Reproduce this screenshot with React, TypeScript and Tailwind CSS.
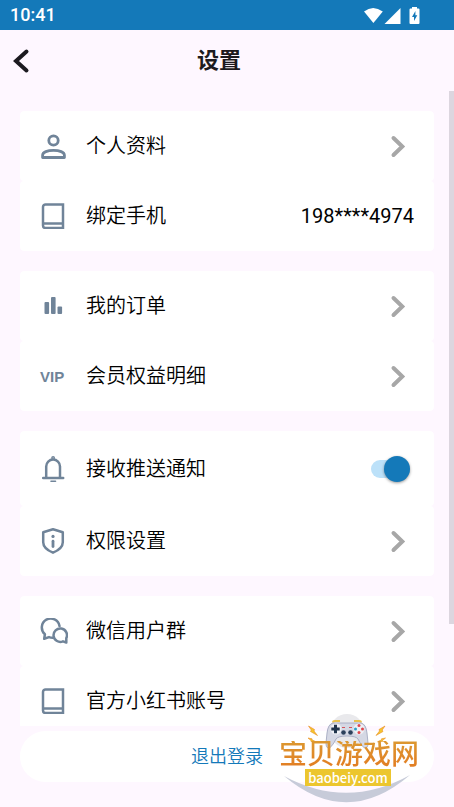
import { useState, type ReactNode } from "react";

const iconProps = {
  viewBox: "0 0 26 26",
  fill: "none",
  stroke: "currentColor",
  strokeWidth: 2.8,
  strokeLinecap: "round" as const,
  strokeLinejoin: "round" as const,
  className: "size-[26px]",
  "aria-hidden": true,
};

const UserIcon = () => (
  <svg {...iconProps}>
    <circle cx="13.5" cy="7.5" r="4.7" />
    <path d="M2.6 24.500v-2.200c0-3.200 5-5 10.900-5s10.900 1.800 10.900 5v2.200z" />
  </svg>
);

const BookIcon = () => (
  <svg {...iconProps} strokeWidth={2.5} strokeLinecap="butt" strokeLinejoin="miter">
    <path d="M23 1.500v23.500H5.500A2.500 2.500 0 0 1 3 22.500V4A2.500 2.500 0 0 1 5.500 1.500z" />
    <path d="M3 20.500h20" />
  </svg>
);

const ChartIcon = () => (
  <svg {...iconProps} stroke="none" fill="currentColor">
    <rect x="4.5" y="9" width="4.600" height="12" rx="1" />
    <rect x="11" y="4" width="4.600" height="17" rx="1" />
    <rect x="17.500" y="13.500" width="4.600" height="7.500" rx="1" />
  </svg>
);

const BellIcon = () => (
  <svg {...iconProps} strokeWidth={2.500}>
    <path d="M3.200 22h20M6.200 22V10.500a6.900 6.900 0 0 1 13.800 0V22" />
    <path d="M11 25.200h4.500" strokeWidth="1.600" />
    <circle cx="13.100" cy="2" r="0.700" />
  </svg>
);

const ShieldIcon = () => (
  <svg {...iconProps} strokeWidth={2.500}>
    <path d="M13 1.300 22.800 4.300v9.900c0 5-4.700 8.300-9.800 10.500C7.900 22.500 3.200 19.200 3.200 14.200V4.300z" />
    <path d="M13 13.200v5.300" strokeWidth="2.800" />
    <circle cx="13" cy="8.400" r="1.600" fill="currentColor" stroke="none" />
  </svg>
);

const ChatIcon = () => (
  <svg {...iconProps} viewBox="0 0 28 26" strokeWidth={2.500} className="h-[26px] w-7">
    <path d="M13 19.800a9 9 0 0 1-4-.7L4.200 20.800l.7-4.600A8.900 8.900 0 1 1 19.500 8" />
    <path d="M26.300 24.500v-4.400A6.700 6.700 0 1 0 23 23.300z" />
  </svg>
);

const Chevron = () => (
  <svg viewBox="0 0 26 26" className="mr-[3px] size-[26px] shrink-0 text-[#a7a7a7]" fill="none" stroke="currentColor" strokeWidth="4" strokeLinecap="round" aria-hidden="true">
    <path d="m8.500 5 8.800 8.500-8.800 8.500" />
  </svg>
);

const rowClass = "flex h-[70px] w-full items-center rounded-sm bg-white px-5 text-left text-xl";

function RowContent({ icon, label, children }: { icon: ReactNode; label: string; children?: ReactNode }) {
  return (
    <>
      <span className="flex w-[46px] shrink-0 items-center text-[#708499]">{icon}</span>
      <span className="flex-1 font-[350] leading-7">{label}</span>
      {children}
    </>
  );
}

function LinkRow({ icon, label }: { icon: ReactNode; label: string }) {
  return (
    <li>
      <button type="button" className={rowClass}>
        <RowContent icon={icon} label={label}>
          <Chevron />
        </RowContent>
      </button>
    </li>
  );
}

function Card({ children }: { children: ReactNode }) {
  return <ul className="shrink-0 overflow-hidden rounded-sm">{children}</ul>;
}

function StatusBar() {
  return (
    <div className="flex h-[30px] shrink-0 items-center justify-between bg-[#1479b9] pl-[10px] pr-[34px] text-white">
      <span className="font-[Roboto] text-lg font-medium leading-[30px]">10:41</span>
      <svg viewBox="0 0 56 17" className="h-[17px] w-14" fill="currentColor" aria-hidden="true">
        <path d="M0 4.500Q9 -2.500 18.800 4.500L9.400 16z" />
        <path d="M36.500 1v16H20.500z" />
        <path d="M48 0h5v1.500h1.500q1 0 1 1V16q0 1-1 1h-8q-1 0-1-1V2.500q0-1 1-1H48z" />
        <path d="M51.400 4 48 10h2v4l3.300-5.800h-1.900z" fill="#1479b9" />
      </svg>
    </div>
  );
}

function Bolts() {
  return (
    <g fill="#f5c52c" stroke="#e98d25" strokeWidth="0.600">
      <path d="m29.500 14 6 3.500-.5 1.500 3.500 4.500-7-4 .8-1.500z" />
      <path d="m29 26 4 .8v1l4 2-5-.3v-1z" />
    </g>
  );
}

function Watermark() {
  return (
    <div className="pointer-events-none absolute bottom-[3px] right-[35px] h-[92px] w-[140px]">
      <svg viewBox="0 0 140 92" className="absolute inset-0 size-full" aria-hidden="true">
        <path d="M5 64Q68 98 131 63Q68 117 5 64z" fill="#c7cbd9" />
        <circle cx="68" cy="19" r="17" fill="#e9e9ec" />
        <path d="M54 10.500q0-1.500 2-1.500h5M82 10.500q0-1.500-2-1.500h-5" stroke="#e8c24c" strokeWidth="1.800" fill="none" />
        <path d="M54 11h28q5 1 6 10l1 10q0 5-2.500 5-3 0-7.500-9-2-3-11-3t-11 3q-4.500 9-7.500 9-2.500 0-2.500-5l1-10q1-9 6-10z" fill="#d5d8e4" stroke="#9ca2bb" strokeWidth="0.800" />
        <circle cx="57" cy="17" r="5.500" fill="#eef0f5" />
        <circle cx="80" cy="17" r="5.500" fill="#eef0f5" />
        <path d="M56.500 12.800v8.400M52.300 17h8.400" stroke="#20344c" strokeWidth="3" />
        <circle cx="80" cy="13.500" r="1.500" fill="#e0464c" />
        <circle cx="80" cy="20.500" r="1.500" fill="#e0464c" />
        <circle cx="76.500" cy="17" r="1.500" fill="#2b9fc6" />
        <circle cx="83.500" cy="17" r="1.500" fill="#e0464c" />
        <circle cx="64.500" cy="20.500" r="2.300" fill="#2b405b" />
        <circle cx="71.500" cy="20.500" r="2.300" fill="#2b405b" />
        <path d="M63 15.500h3M70 15.500h3" stroke="#d4545b" strokeWidth="1.200" />
        <Bolts />
        <g transform="matrix(-1 0 0 1 135.500 0)">
          <Bolts />
        </g>
      </svg>
      <div className="absolute inset-x-0 top-[29px] bg-linear-to-b from-[#dc9830] to-[#e27b22] bg-clip-text text-[28px] font-medium leading-7 text-transparent">
        宝贝游戏网
      </div>
      <div className="absolute left-[26px] top-[57px] flex h-[17px] w-[86px] items-center justify-center bg-[#ecc62e] font-['Noto_Sans_CJK_SC',sans-serif] text-[13px] font-medium leading-4 text-white">
        baobeiy.com
      </div>
    </div>
  );
}

export default function App() {
  const [push, setPush] = useState(true);
  return (
    <div className="relative flex h-screen flex-col overflow-hidden bg-[#fef7ff] font-[Roboto,'Noto_Sans_CJK_SC',sans-serif] text-black">
      <StatusBar />
      <header className="grid h-[61px] shrink-0 grid-cols-[44px_1fr_60px] items-center">
        <button type="button" aria-label="返回" className="flex h-11 items-center pl-[10px] text-[#1c1a20]">
          <svg viewBox="0 0 24 26" className="h-[26px] w-6" fill="none" stroke="currentColor" strokeWidth="4" strokeLinecap="round" aria-hidden="true">
            <path d="M16.500 3.500 6 13l10.500 9.500" />
          </svg>
        </button>
        <h1 className="text-center text-[22px] font-bold leading-8 text-[#1d1b20]">设置</h1>
      </header>
      <div className="flex min-h-0 flex-1 items-start overflow-hidden">
        <main className="ml-5 mr-[15px] flex flex-1 flex-col gap-5 pt-5">
          <Card>
            <LinkRow icon={<UserIcon />} label="个人资料" />
            <li className={rowClass}>
              <RowContent icon={<BookIcon />} label="绑定手机">
                <span>198****4974</span>
              </RowContent>
            </li>
          </Card>
          <Card>
            <LinkRow icon={<ChartIcon />} label="我的订单" />
            <LinkRow
              icon={<span className="font-['Liberation_Sans'] text-[15px] font-bold">VIP</span>}
              label="会员权益明细"
            />
          </Card>
          <Card>
            <li>
              <label className="flex h-[75px] w-full items-center rounded-sm bg-white px-5 text-xl">
                <RowContent icon={<BellIcon />} label="接收推送通知">
                  <input
                    type="checkbox"
                    role="switch"
                    checked={push}
                    onChange={(event) => setPush(event.target.checked)}
                    className="relative mr-1 h-[18px] w-[39px] appearance-none rounded-full bg-[#dddddd] before:absolute before:-top-1 before:left-0 before:size-[26px] before:rounded-full before:bg-[#fafafa] before:shadow-[0_1px_3px_#0006] checked:bg-[#bce1f9] checked:before:left-[13px] checked:before:bg-[#1479b9]"
                  />
                </RowContent>
              </label>
            </li>
            <LinkRow icon={<ShieldIcon />} label="权限设置" />
          </Card>
          <Card>
            <LinkRow icon={<ChatIcon />} label="微信用户群" />
            <LinkRow icon={<BookIcon />} label="官方小红书账号" />
          </Card>
        </main>
        <div className="h-[84%] w-[5px] shrink-0 bg-[#dcd6df]" aria-hidden="true" />
      </div>
      <footer className="shrink-0 px-5 pb-[25px] pt-[5px]">
        <button type="button" className="h-[51px] w-full rounded-full bg-white text-lg font-[350] text-[#1479b9]">
          退出登录
        </button>
      </footer>
      <Watermark />
    </div>
  );
}
